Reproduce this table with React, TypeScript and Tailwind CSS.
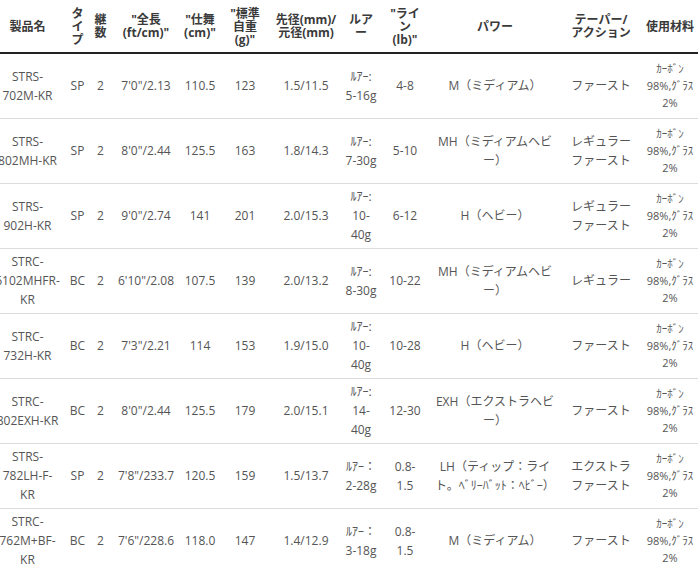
import React from "react";

type Row = {
  name: string[];
  type: string;
  pcs: string;
  len: string;
  close: string;
  wt: string;
  tip: string;
  lure: string[];
  line: string[];
  power: string[];
  taper: string[];
};

const rows: Row[] = [
  { name: ["STRS-", "702M-KR"], type: "SP", pcs: "2", len: `7'0"/2.13`, close: "110.5", wt: "123", tip: "1.5/11.5", lure: ["ﾙｱｰ:", "5-16g"], line: ["4-8"], power: ["M（ミディアム）"], taper: ["ファースト"] },
  { name: ["STRS-", "802MH-KR"], type: "SP", pcs: "2", len: `8'0"/2.44`, close: "125.5", wt: "163", tip: "1.8/14.3", lure: ["ﾙｱｰ:", "7-30g"], line: ["5-10"], power: ["MH（ミディアムヘビ", "ー）"], taper: ["レギュラー", "ファースト"] },
  { name: ["STRS-", "902H-KR"], type: "SP", pcs: "2", len: `9'0"/2.74`, close: "141", wt: "201", tip: "2.0/15.3", lure: ["ﾙｱｰ:", "10-", "40g"], line: ["6-12"], power: ["H（ヘビー）"], taper: ["レギュラー", "ファースト"] },
  { name: ["STRC-", "6102MHFR-", "KR"], type: "BC", pcs: "2", len: `6'10"/2.08`, close: "107.5", wt: "139", tip: "2.0/13.2", lure: ["ﾙｱｰ:", "8-30g"], line: ["10-22"], power: ["MH（ミディアムヘビ", "ー）"], taper: ["レギュラー"] },
  { name: ["STRC-", "732H-KR"], type: "BC", pcs: "2", len: `7'3"/2.21`, close: "114", wt: "153", tip: "1.9/15.0", lure: ["ﾙｱｰ:", "10-", "40g"], line: ["10-28"], power: ["H（ヘビー）"], taper: ["ファースト"] },
  { name: ["STRC-", "802EXH-KR"], type: "BC", pcs: "2", len: `8'0"/2.44`, close: "125.5", wt: "179", tip: "2.0/15.1", lure: ["ﾙｱｰ:", "14-", "40g"], line: ["12-30"], power: ["EXH（エクストラヘビ", "ー）"], taper: ["ファースト"] },
  { name: ["STRS-", "782LH-F-", "KR"], type: "SP", pcs: "2", len: `7'8"/233.7`, close: "120.5", wt: "159", tip: "1.5/13.7", lure: ["ﾙｱｰ：", "2-28g"], line: ["0.8-", "1.5"], power: ["LH（ティップ：ライ", "ト。ﾍﾞﾘｰﾊﾞｯﾄ：ﾍﾋﾞｰ）"], taper: ["エクストラ", "ファースト"] },
  { name: ["STRC-", "762M+BF-", "KR"], type: "BC", pcs: "2", len: `7'6"/228.6`, close: "118.0", wt: "147", tip: "1.4/12.9", lure: ["ﾙｱｰ：", "3-18g"], line: ["0.8-", "1.5"], power: ["M（ミディアム）"], taper: ["ファースト"] },
];

const widths = [
  "w-[77px]",
  "w-[23px]",
  "w-[23px]",
  "w-[68px]",
  "w-[40px]",
  "w-[50px]",
  "w-[72px]",
  "w-[38px]",
  "w-[50px]",
  "w-[130px]",
  "w-[82px]",
  "w-[56px]",
];

const headers: string[][] = [
  ["製品名"],
  ["タ", "イ", "プ"],
  ["継", "数"],
  [`"全長`, `(ft/cm)"`],
  [`"仕舞`, `(cm)"`],
  [`"標準`, "自重", `(g)"`],
  ["先径(mm)/", "元径(mm)"],
  ["ルア", "ー"],
  [`"ライ`, "ン", `(lb)"`],
  ["パワー"],
  ["テーパー/", "アクション"],
  ["使用材料"],
];

function Lines({ lines }: { lines: string[] }) {
  return (
    <>
      {lines.map((l, i) => (
        <React.Fragment key={i}>
          {i > 0 && <br />}
          {l}
        </React.Fragment>
      ))}
    </>
  );
}

const td = "h-[65px] border-b border-[#dcdcdc] p-0 text-center align-middle whitespace-nowrap";

export default function App() {
  return (
    <div className="w-[700px] h-[569px] overflow-hidden bg-white font-['Open_Sans','Noto_Sans_CJK_JP',sans-serif] text-[12px] leading-[19px] text-[#555]">
      <table className="-ml-[11px] w-[709px] table-fixed border-collapse">
        <colgroup>
          {widths.map((w, i) => (
            <col key={i} className={w} />
          ))}
        </colgroup>
        <thead>
          <tr>
            {headers.map((h, i) => (
              <th
                key={i}
                className="h-[53px] border-b-2 border-[#222] p-0 text-center align-middle whitespace-nowrap text-[12px] leading-[13px] font-bold text-[#3a3a3a]"
              >
                <Lines lines={h} />
              </th>
            ))}
          </tr>
        </thead>
        <tbody>
          {rows.map((r, i) => (
            <tr key={i}>
              <td className={td}>
                <Lines lines={r.name} />
              </td>
              <td className={td}>{r.type}</td>
              <td className={td}>{r.pcs}</td>
              <td className={td}>{r.len}</td>
              <td className={td}>{r.close}</td>
              <td className={td}>{r.wt}</td>
              <td className={td}>{r.tip}</td>
              <td className={td}>
                <Lines lines={r.lure} />
              </td>
              <td className={td}>
                <Lines lines={r.line} />
              </td>
              <td className={td}>
                <Lines lines={r.power} />
              </td>
              <td className={td}>
                <Lines lines={r.taper} />
              </td>
              <td className={`${td} text-[11px] leading-[17px]`}>
                <Lines lines={["ｶｰﾎﾞﾝ", "98%,ｸﾞﾗｽ", "2%"]} />
              </td>
            </tr>
          ))}
        </tbody>
      </table>
    </div>
  );
}
